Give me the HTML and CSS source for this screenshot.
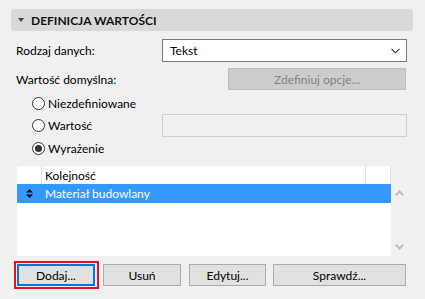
FILE: index.html
```html
<!DOCTYPE html>
<html>
<head>
    <title>Definicja wartości</title>
    <link rel="stylesheet" href="styles.css">
</head>
<body>
    <div class="panel">
        <div class="section-head">
            <span class="caret"></span>
            <span class="section-title">DEFINICJA WARTOŚCI</span>
        </div>

        <div class="row row-type">
            <span class="label">Rodzaj danych:</span>
            <div class="select">
                <span>Tekst</span>
                <svg class="chevron" width="9" height="6" viewBox="0 0 9 6"><path d="M0.5 0.8 L4.5 4.8 L8.5 0.8" fill="none" stroke="#333" stroke-width="1.1"/></svg>
            </div>
        </div>

        <div class="row row-default">
            <span class="label">Wartość domyślna:</span>
            <div class="btn btn-disabled">Zdefiniuj opcje...</div>
        </div>

        <div class="radio-row radio-first">
            <span class="radio"></span>
            <span>Niezdefiniowane</span>
        </div>
        <div class="radio-row radio-value">
            <span class="radio"></span>
            <span class="radio-label">Wartość</span>
            <div class="field-disabled"></div>
        </div>
        <div class="radio-row radio-last">
            <span class="radio checked"></span>
            <span>Wyrażenie</span>
        </div>

        <div class="list-wrap">
            <div class="list">
                <div class="list-head">
                    <span class="col-handle"></span>
                    <span class="col-name">Kolejność</span>
                    <span class="col-extra"></span>
                </div>
                <div class="list-row selected">
                    <span class="col-handle">
                        <svg width="7" height="9" viewBox="0 0 7 9"><path d="M3.5 0 L7 3.5 L0 3.5 Z M0 5.5 L7 5.5 L3.5 9 Z" fill="#000"/></svg>
                    </span>
                    <span class="col-name">Materiał budowlany</span>
                </div>
            </div>
            <div class="scroll">
                <svg width="9" height="6" viewBox="0 0 9 6"><path d="M0.8 5.2 L4.5 1.5 L8.2 5.2" fill="none" stroke="#bdbdbd" stroke-width="2"/></svg>
                <svg width="9" height="6" viewBox="0 0 9 6"><path d="M0.8 0.8 L4.5 4.5 L8.2 0.8" fill="none" stroke="#bdbdbd" stroke-width="2"/></svg>
            </div>
        </div>

        <div class="buttons">
            <div class="focus-ring"><div class="btn btn-default">Dodaj...</div></div>
            <div class="btn btn-remove">Usuń</div>
            <div class="btn btn-edit">Edytuj...</div>
            <div class="btn btn-check">Sprawdź...</div>
        </div>
    </div>
</body>
</html>
```

FILE: styles.css
```css
body { margin: 0; background: #f0f0f0; font-family: Lato, "Noto Sans", sans-serif; font-size: 12px; color: #000; }
.panel { padding: 9px 0 0 11px; width: 402px; }

.section-head { display: flex; align-items: center; height: 22px; background: #d9d9d9; border-radius: 4px; padding-left: 7px; }
.caret { width: 0; height: 0; border-left: 3.5px solid transparent; border-right: 3.5px solid transparent; border-top: 4px solid #444; margin-right: 7px; }
.section-title { font-weight: bold; font-size: 12px; color: #111; }

.row { display: flex; align-items: center; padding-left: 5px; }
.row-type { margin-top: 8px; height: 23px; }
.row-default { margin-top: 6px; height: 22px; }
.label { width: 146px; }
.row-default .label { width: 212px; }

.select { display: flex; align-items: center; justify-content: space-between; box-sizing: border-box; width: 245px; height: 23px; background: #fff; border: 1px solid #7a7a7a; padding: 0 6px 0 7px; }
.chevron { margin-top: 1px; }

.btn { display: flex; align-items: center; justify-content: center; box-sizing: border-box; height: 22px; background: #e1e1e1; border: 1px solid #adadad; }
.btn-disabled { width: 178px; background: #cccccc; border-color: #bfbfbf; color: #838383; }

.radio-row { display: flex; align-items: center; height: 22px; padding-left: 21px; }
.radio-first { margin-top: 2px; }
.radio-value { height: 23px; }
.radio-last { height: 23px; }
.radio { box-sizing: border-box; width: 13px; height: 13px; border: 1px solid #333; border-radius: 50%; background: #fff; margin-right: 3px; display: flex; align-items: center; justify-content: center; }
.radio.checked::after { content: ""; width: 7px; height: 7px; border-radius: 50%; background: #333; }
.radio-label { width: 114px; }
.field-disabled { box-sizing: border-box; width: 245px; height: 23px; border: 1px solid #cfcfcf; background: #f0f0f0; }

.list-wrap { display: flex; margin-top: 6px; margin-left: 6px; height: 90px; }
.list { width: 374px; background: #fff; }
.list-head { display: flex; height: 18px; align-items: center; }
.list-head .col-handle { border-right: 1px solid #e3e3e3; height: 18px; }
.list-head .col-extra { width: 24px; height: 18px; border-left: 1px solid #e3e3e3; border-right: 1px solid #e3e3e3; }
.col-handle { width: 24px; display: flex; align-items: center; justify-content: center; }
.col-name { flex: 1; padding-left: 3px; }
.list-row { display: flex; align-items: center; height: 19px; }
.list-row.selected { background: #3399ff; color: #fff; }
.list-row .col-handle { width: 25px; }
.scroll { width: 16px; display: flex; flex-direction: column; justify-content: space-between; align-items: center; padding: 24px 0 6px; box-sizing: border-box; }

.buttons { display: flex; margin-top: 8px; margin-left: 3px; }
.focus-ring { box-sizing: border-box; width: 85px; height: 28px; border: 2px solid #e81123; padding: 1px; margin-top: -3px; }
.btn-default { width: 78px; height: 22px; border: 2px solid #0078d7; }
.btn-remove { width: 78px; margin-left: 4px; }
.btn-edit { width: 77px; margin-left: 8px; }
.btn-check { width: 133px; margin-left: 7px; }
```
